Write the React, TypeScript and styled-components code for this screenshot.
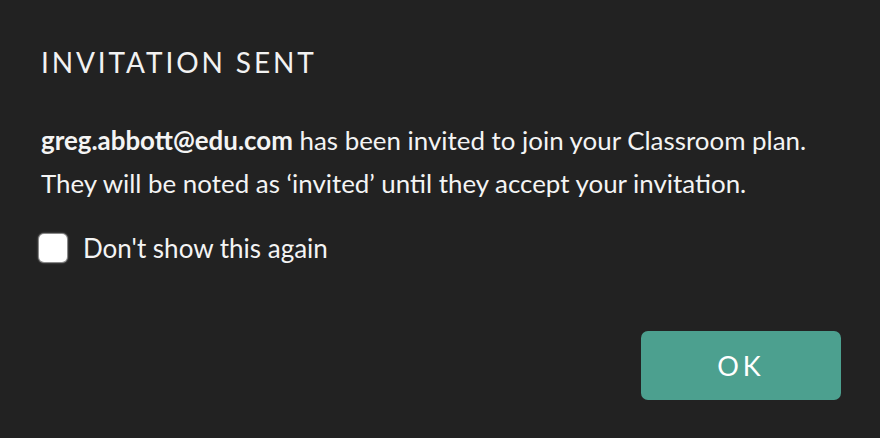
import React, { useState } from "react";
import styled, { createGlobalStyle } from "styled-components";

const GlobalStyle = createGlobalStyle`
  html, body {
    margin: 0;
    padding: 0;
    background: #222222;
  }
`;

const Dialog = styled.div`
  box-sizing: border-box;
  width: 880px;
  height: 438px;
  background: #222222;
  padding: 44px 39px 38px 41px;
  display: flex;
  flex-direction: column;
  font-family: "Lato", sans-serif;
  color: #ffffff;
`;

const Title = styled.h2`
  margin: 0;
  font-family: "Lato", sans-serif;
  font-size: 28px;
  font-weight: 400;
  letter-spacing: 2.9px;
  line-height: 36px;
  color: #f2f2f2;
`;

const Message = styled.p`
  margin: 39px 0 0;
  font-size: 25.9px;
  line-height: 43px;
  color: #f4f4f4;
`;

const Email = styled.strong`
  font-weight: 700;
`;

const CheckRow = styled.label`
  display: flex;
  align-items: center;
  gap: 16px;
  margin-top: 28px;
  font-size: 26px;
  line-height: 30px;
  color: #f4f4f4;
  cursor: pointer;
`;

const Box = styled.span<{ $checked: boolean }>`
  box-sizing: border-box;
  width: 28px;
  height: 28px;
  margin-left: -2px;
  border-radius: 5px;
  background: ${({ $checked }) => ($checked ? "#4ca08f" : "#ffffff")};
  box-shadow: 0 0 0 1px #8a8a8a, 0 0 2px 1px rgba(200, 200, 200, 0.5);
  flex-shrink: 0;
`;

const Footer = styled.div`
  margin-top: auto;
  display: flex;
  justify-content: flex-end;
`;

const OkButton = styled.button`
  width: 200px;
  height: 69px;
  border: none;
  border-radius: 7px;
  background: #4ca08f;
  color: #ffffff;
  font-family: "Lato", sans-serif;
  font-size: 27px;
  font-weight: 400;
  letter-spacing: 4px;
  cursor: pointer;
`;

const App: React.FC = () => {
  const [checked, setChecked] = useState(false);

  return (
    <>
      <GlobalStyle />
      <Dialog>
        <Title>INVITATION SENT</Title>
        <Message>
          <Email>greg.abbott@edu.com</Email> has been invited to join your
          Classroom plan.
          <br />
          They will be noted as ‘invited’ until they accept your invitation.
        </Message>
        <CheckRow onClick={() => setChecked(!checked)}>
          <Box $checked={checked} />
          Don't show this again
        </CheckRow>
        <Footer>
          <OkButton>OK</OkButton>
        </Footer>
      </Dialog>
    </>
  );
};

export default App;
